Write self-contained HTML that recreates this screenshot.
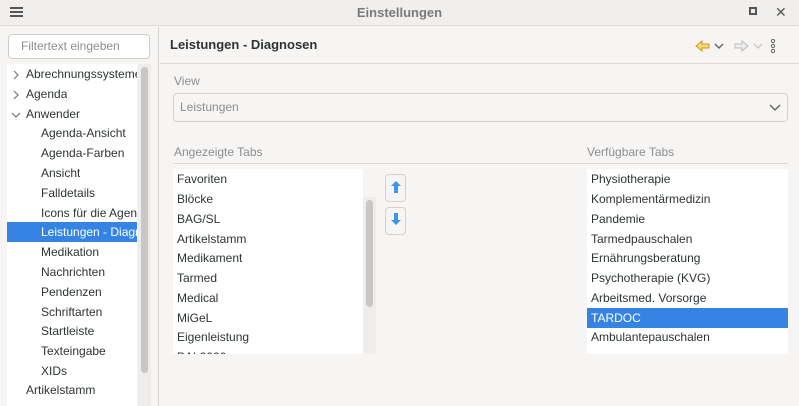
<!DOCTYPE html>
<html><head><meta charset="utf-8"><style>
*{box-sizing:border-box;margin:0;padding:0}
body{width:799px;height:406px;overflow:hidden;background:#f6f5f4;font-family:"Liberation Sans",sans-serif;font-size:12px;color:#2e3436;position:relative}
.abs{position:absolute}
.title{left:0;top:0;width:799px;height:26px;background:#f0efed;border-bottom:1px solid #dcdad7}
.left{left:0;top:27px;width:159px;height:379px;background:#f6f5f4;border-right:1px solid #d8d6d3}
.row{position:absolute;height:20px;line-height:20px;white-space:nowrap;overflow:hidden}
.sel{background:#3584e4;color:#fff}
.lbl{color:#8b8e8f}
.list{background:#fff}
</style></head><body>
<div class="abs title">
 <div class="abs" style="left:10px;top:7px;width:13px;height:2px;background:#555;box-shadow:0 4px 0 #555,0 8px 0 #555"></div>
 <div class="abs" style="left:0;width:799px;top:5px;text-align:center;font-weight:bold;color:#7a7a7a;font-size:13px">Einstellungen</div>
 <div class="abs" style="left:749px;top:7px;width:8px;height:8px;border:2px solid #555"></div>
 <div class="abs" style="left:775px;top:4px;font-size:14px;color:#555">✕</div>
</div>
<div class="abs left">
 <div class="abs" style="left:8px;top:7px;width:142px;height:25px;border:1px solid #cfcdca;border-radius:4px;background:#fff;padding-left:12px;line-height:23px;color:#8b8e8f">Filtertext eingeben</div>
 <div class="abs list" style="left:7px;top:37px;width:130px;height:342px"></div>
 <div class="abs" style="left:138px;top:37px;width:13px;height:342px;background:#eeedec"></div>
 <div class="abs" style="left:141px;top:40px;width:7px;height:306px;background:#c8c7c5;border-radius:4px"></div>
</div>
<div class="abs" style="left:7px;top:64px;width:130px;height:342px;overflow:hidden">
 <svg class="abs" style="left:4px;top:5px" width="10" height="52"><path d="M3 2 L7 6 L3 10 M3 22 L7 26 L3 30 M1 44 L5 48 L9 44" fill="none" stroke="#777" stroke-width="1.2"/></svg>
 <div class="row" style="top:0;left:19px">Abrechnungssysteme</div>
 <div class="row" style="top:20px;left:19px">Agenda</div>
 <div class="row" style="top:40px;left:19px">Anwender</div>
 <div class="row" style="top:59px;left:34px">Agenda-Ansicht</div>
 <div class="row" style="top:79px;left:34px">Agenda-Farben</div>
 <div class="row" style="top:99px;left:34px">Ansicht</div>
 <div class="row" style="top:119px;left:34px">Falldetails</div>
 <div class="row" style="top:139px;left:34px">Icons für die Agenda</div>
 <div class="row sel" style="top:158px;left:0;width:130px;padding-left:34px">Leistungen - Diagnosen</div>
 <div class="row" style="top:178px;left:34px">Medikation</div>
 <div class="row" style="top:198px;left:34px">Nachrichten</div>
 <div class="row" style="top:218px;left:34px">Pendenzen</div>
 <div class="row" style="top:238px;left:34px">Schriftarten</div>
 <div class="row" style="top:257px;left:34px">Startleiste</div>
 <div class="row" style="top:277px;left:34px">Texteingabe</div>
 <div class="row" style="top:297px;left:34px">XIDs</div>
 <div class="row" style="top:316px;left:19px">Artikelstamm</div>
</div>
<div class="abs" style="left:160px;top:27px;width:639px;height:37px;border-bottom:1px solid #dcdad7;background:#f6f5f4"></div>
<div class="abs" style="left:170px;top:37px;font-weight:bold;font-size:13px">Leistungen - Diagnosen</div>
<svg class="abs" style="left:694px;top:38px" width="100" height="16">
 <path d="M2 8 L8 3 V6 H15 V10 H8 V13 Z" fill="#f7d77a" stroke="#c99a1c" stroke-width="1"/>
 <path d="M21 6 L25 10 L29 6" fill="none" stroke="#666" stroke-width="1.5"/>
 <path d="M54 8 L48 3 V6 H41 V10 H48 V13 Z" fill="#eee" stroke="#bbb" stroke-width="1"/>
 <path d="M60 6 L64 10 L68 6" fill="none" stroke="#ccc" stroke-width="1.5"/>
 <circle cx="79" cy="3" r="1.6" fill="none" stroke="#666"/><circle cx="79" cy="8" r="1.6" fill="none" stroke="#666"/><circle cx="79" cy="13" r="1.6" fill="none" stroke="#666"/>
</svg>
<div class="abs lbl" style="left:174px;top:74px">View</div>
<div class="abs" style="left:173px;top:93px;width:615px;height:29px;border:1px solid #d3d1ce;border-radius:4px;padding-left:6px;line-height:27px;color:#8b8e8f">Leistungen</div>
<svg class="abs" style="left:769px;top:102px" width="12" height="10"><path d="M1 3 L6 8 L11 3" fill="none" stroke="#666" stroke-width="1.5"/></svg>
<div class="abs lbl" style="left:174px;top:145px">Angezeigte Tabs</div>
<div class="abs" style="left:173px;top:163px;width:615px;height:1px;background:#dcdad7"></div>
<div class="abs lbl" style="left:587px;top:145px">Verfügbare Tabs</div>
<div class="abs list" style="left:173px;top:169px;width:190px;height:185px;overflow:hidden">
 <div class="row" style="top:0;left:4px">Favoriten</div>
 <div class="row" style="top:20px;left:4px">Blöcke</div>
 <div class="row" style="top:40px;left:4px">BAG/SL</div>
 <div class="row" style="top:60px;left:4px">Artikelstamm</div>
 <div class="row" style="top:79px;left:4px">Medikament</div>
 <div class="row" style="top:99px;left:4px">Tarmed</div>
 <div class="row" style="top:119px;left:4px">Medical</div>
 <div class="row" style="top:139px;left:4px">MiGeL</div>
 <div class="row" style="top:158px;left:4px">Eigenleistung</div>
 <div class="row" style="top:178px;left:4px">BAL2000</div>
</div>
<div class="abs" style="left:363px;top:197px;width:13px;height:157px;background:#eeedec"></div>
<div class="abs" style="left:366px;top:200px;width:7px;height:107px;background:#c8c7c5;border-radius:4px"></div>
<div class="abs" style="left:385px;top:174px;width:21px;height:28px;border:1px solid #d3d1ce;border-radius:4px"></div>
<div class="abs" style="left:385px;top:207px;width:21px;height:28px;border:1px solid #d3d1ce;border-radius:4px"></div>
<svg class="abs" style="left:389px;top:180px" width="14" height="52">
 <path d="M7 1 L12 6 H9 V13 H5 V6 H2 Z" fill="#3c96ea"/>
 <path d="M7 45 L12 40 H9 V33 H5 V40 H2 Z" fill="#3c96ea"/>
</svg>
<div class="abs list" style="left:587px;top:169px;width:201px;height:185px">
 <div class="row" style="top:0;left:4px">Physiotherapie</div>
 <div class="row" style="top:20px;left:4px">Komplementärmedizin</div>
 <div class="row" style="top:40px;left:4px">Pandemie</div>
 <div class="row" style="top:60px;left:4px">Tarmedpauschalen</div>
 <div class="row" style="top:79px;left:4px">Ernährungsberatung</div>
 <div class="row" style="top:99px;left:4px">Psychotherapie (KVG)</div>
 <div class="row" style="top:119px;left:4px">Arbeitsmed. Vorsorge</div>
 <div class="row sel" style="top:139px;left:0;width:201px;padding-left:4px">TARDOC</div>
 <div class="row" style="top:158px;left:4px">Ambulantepauschalen</div>
</div>
</body></html>
